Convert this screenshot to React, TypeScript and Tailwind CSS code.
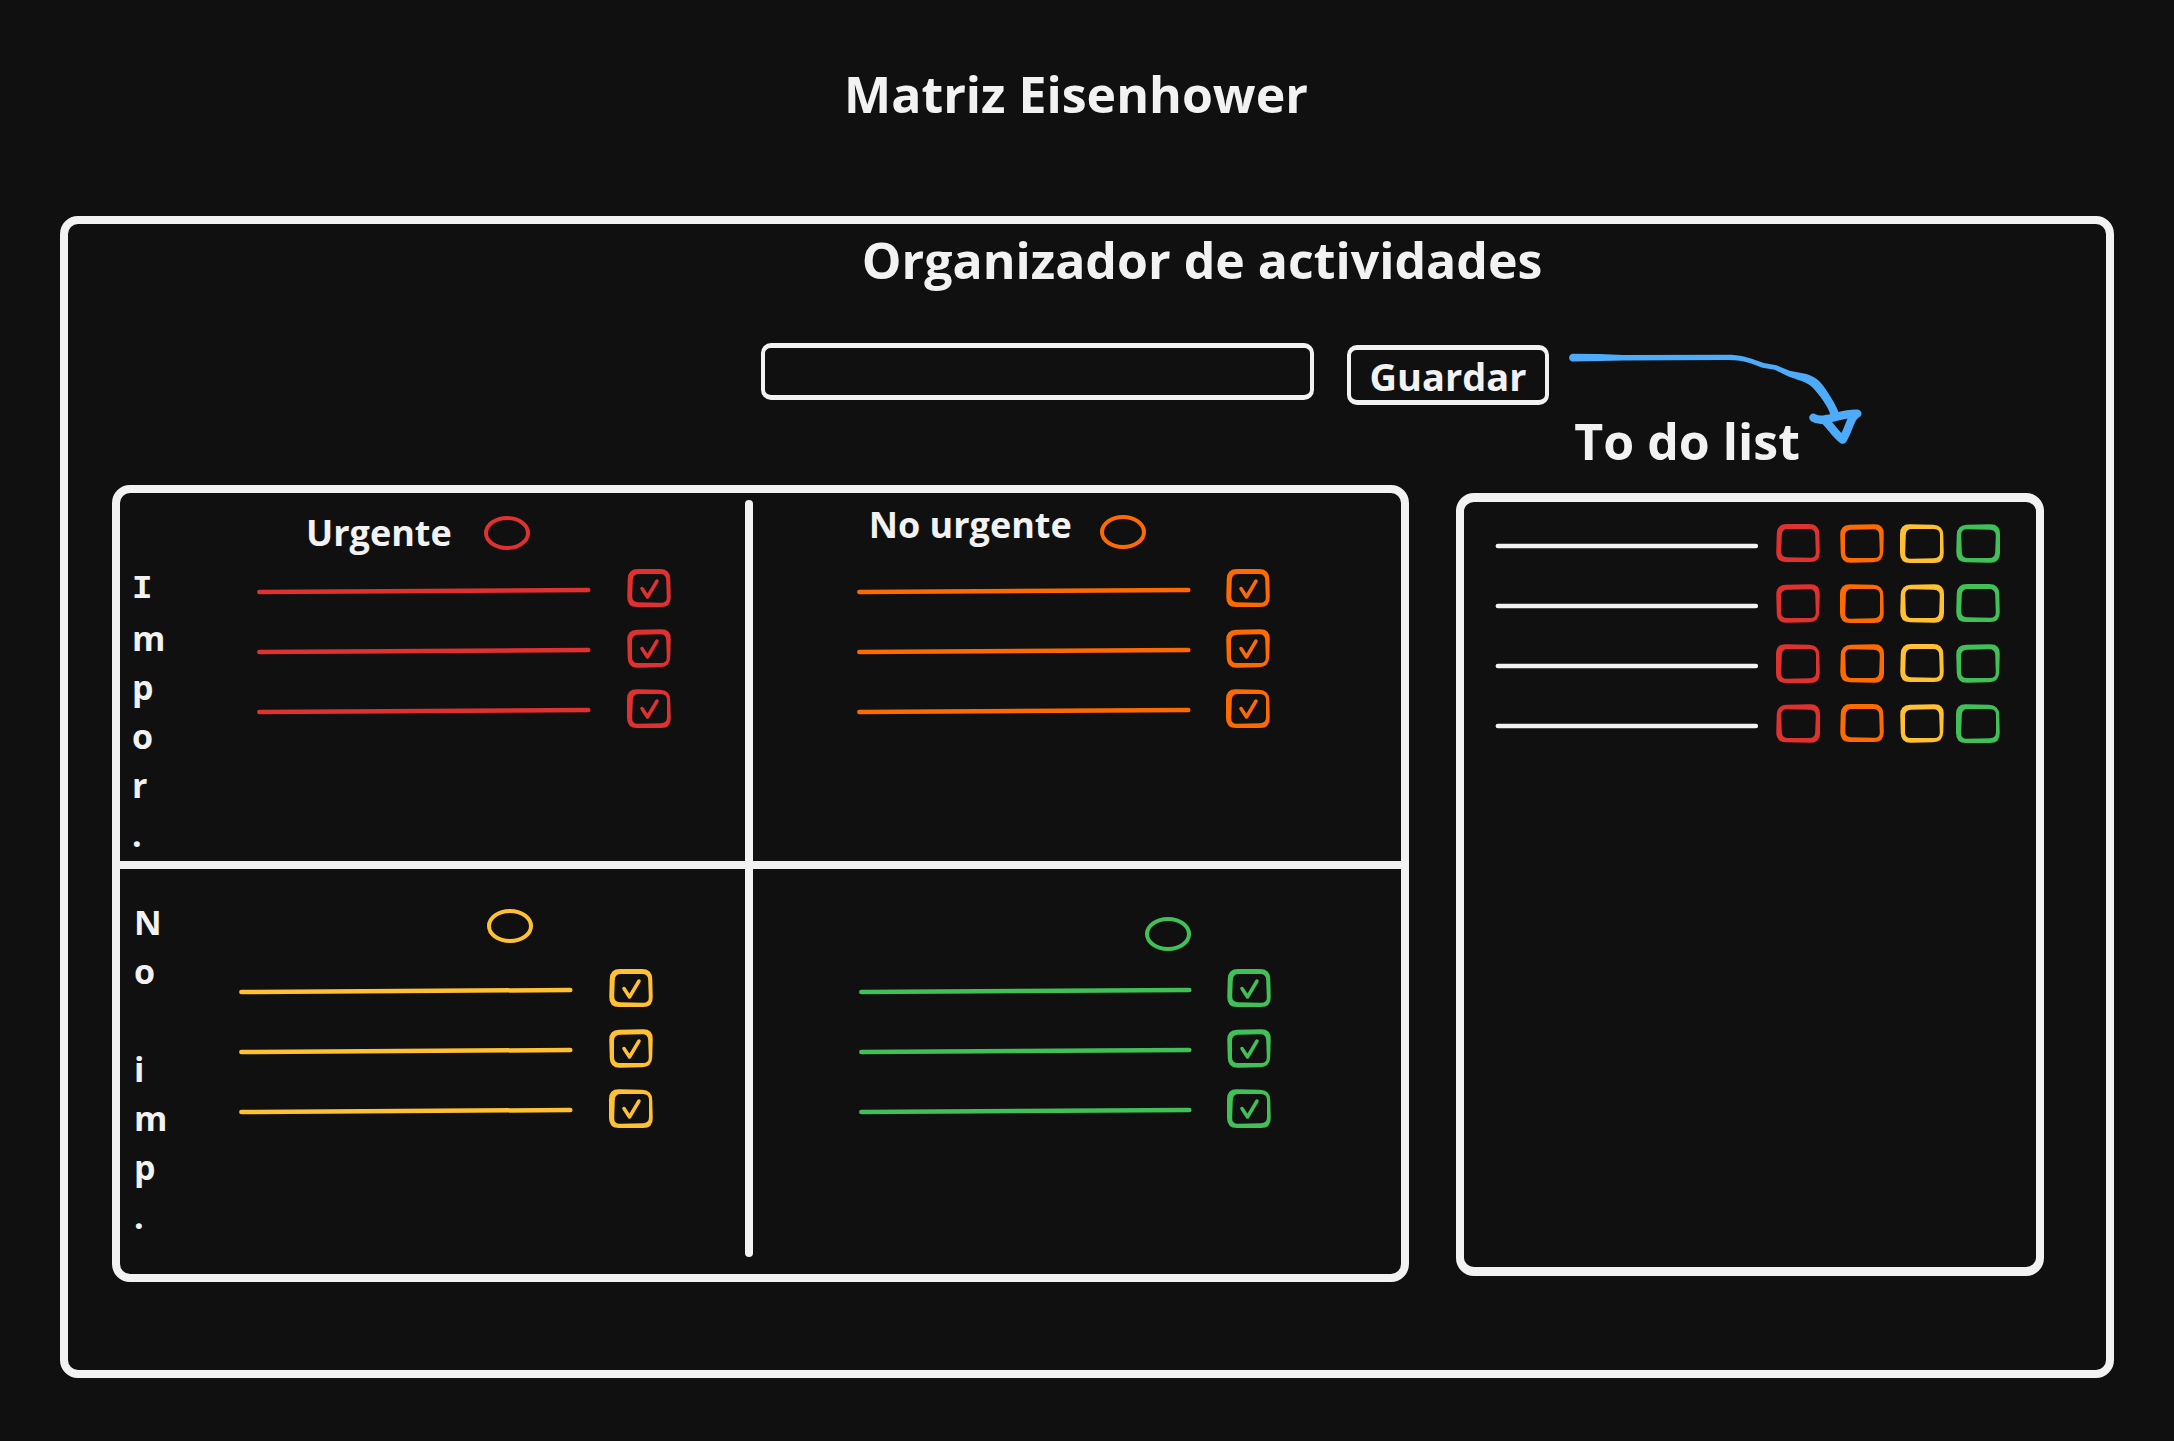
import React from "react";

type Point = [number, number];

/** Builds a closed path with soft corners through the given corner points. */
function softPath(points: Point[], radius: number): string {
  const toward = (from: Point, to: Point): Point => {
    const length = Math.hypot(to[0] - from[0], to[1] - from[1]);
    const t = radius / length;
    return [from[0] + (to[0] - from[0]) * t, from[1] + (to[1] - from[1]) * t];
  };
  return (
    points
      .map((p, i) => {
        const before = toward(p, points[(i + points.length - 1) % points.length]);
        const after = toward(p, points[(i + 1) % points.length]);
        return `${i === 0 ? "M" : "L"}${before.join(" ")} Q${p.join(" ")} ${after.join(" ")}`;
      })
      .join(" ") + " Z"
  );
}

const boxShapes: { outer: Point[]; inner: Point[] }[] = [
  { outer: [[1, 0], [43, 0], [44, 38], [0, 38]], inner: [[6, 5], [39, 5], [40, 34], [5, 33]] },
  { outer: [[0, 1], [44, 0], [43, 38], [1, 39]], inner: [[5, 6], [39, 5], [40, 34], [5, 34]] },
  { outer: [[0, 0], [43, 1], [44, 39], [0, 39]], inner: [[6, 5], [40, 5], [40, 34], [5, 35]] },
  { outer: [[1, 1], [44, 0], [44, 39], [0, 38]], inner: [[5, 5], [40, 6], [39, 34], [6, 34]] },
];

function SketchBox({
  label,
  color,
  shape,
  checked = false,
}: {
  label: string;
  color: string;
  shape: number;
  checked?: boolean;
}) {
  const { outer, inner } = boxShapes[shape % boxShapes.length];
  return (
    <label className={`relative block h-[39px] w-11 shrink-0 ${color}`}>
      <input
        type="checkbox"
        aria-label={label}
        defaultChecked={checked}
        className="peer absolute inset-0 z-10 m-0 cursor-pointer appearance-none"
      />
      <svg viewBox="0 0 44 39" className="block h-full w-full" aria-hidden="true">
        <path fill="currentColor" fillRule="evenodd" d={`${softPath(outer, 10)} ${softPath(inner, 6)}`} />
      </svg>
      <svg
        viewBox="0 0 44 39"
        className="absolute inset-0 hidden h-full w-full peer-checked:block"
        fill="none"
        stroke="currentColor"
        strokeWidth="3.5"
        strokeLinecap="round"
        strokeLinejoin="round"
        aria-hidden="true"
      >
        <path d="M15 19.5 L20.5 28 C23.5 23 27 17 30 12" />
      </svg>
    </label>
  );
}

function SketchLine({ color, slope = 1 }: { color: string; slope?: number }) {
  return (
    <svg
      viewBox="0 0 100 8"
      preserveAspectRatio="none"
      className={`mt-1 h-2 min-w-0 flex-1 overflow-visible ${color}`}
      aria-hidden="true"
    >
      <line
        x1="0.7"
        x2="99.3"
        y1={4 + slope}
        y2={4 - slope}
        stroke="currentColor"
        strokeWidth="4.5"
        strokeLinecap="round"
        vectorEffect="non-scaling-stroke"
      />
    </svg>
  );
}

function Ring({ color }: { color: string }) {
  return (
    <svg viewBox="0 0 46 34" className={`h-[34px] w-[46px] shrink-0 ${color}`} aria-hidden="true">
      <ellipse cx="23" cy="17" rx="21" ry="15" fill="none" stroke="currentColor" strokeWidth="4" />
    </svg>
  );
}

function TaskList({ name, color, className }: { name: string; color: string; className: string }) {
  return (
    <ul className={`flex flex-col gap-[21px] ${className}`}>
      {[0, 1, 2].map((i) => (
        <li key={i} className="flex items-center gap-9">
          <SketchLine color={color} />
          <SketchBox label={`${name} ${i + 1}`} color={color} shape={i} checked />
        </li>
      ))}
    </ul>
  );
}

function RowLabel({ text }: { text: string }) {
  return (
    <h3 className="w-[30px] shrink-0 text-[34px] leading-[49px] font-bold" aria-label={text}>
      {text.split("").map((letter, i) => (
        <span key={i} className={letter === "I" ? "block h-[49px] font-['Liberation_Mono']" : "block h-[49px]"}>
          {letter}
        </span>
      ))}
    </h3>
  );
}

function ArrowToList() {
  return (
    <svg
      viewBox="87 100 880 276"
      className="absolute top-2 left-full ml-5 h-[92px] w-[293px] text-[#4dabf9]"
      aria-hidden="true"
    >
      <path
        fill="currentColor"
        d="M97 102 L180 103 L250 106 L575 105 C610 107 640 118 672 130 L710 137 L750 153 L800 163 C835 173 850 196 862 215 C875 236 890 258 899 284 L872 286 C868 264 840 227 820 205 C805 189 790 186 750 172 L738 167 L705 150 L668 144 L632 131 C610 123 590 121 565 121 L250 122 L180 124 L97 125 C84 122 84 106 97 102 Z"
      />
      <path
        fill="none"
        stroke="currentColor"
        strokeWidth="25"
        strokeLinecap="round"
        strokeLinejoin="round"
        d="M821 294 C832 301 845 302 860 298 C890 293 920 280 953 282 C932 290 930 325 909 360 C885 342 876 322 856 303"
      />
    </svg>
  );
}

const RED = "text-[#e03131]";
const ORANGE = "text-[#fd6a02]";
const YELLOW = "text-[#ffc034]";
const GREEN = "text-[#40c057]";

const categories = [
  { name: "Urgente e importante", color: RED, space: "" },
  { name: "No urgente e importante", color: ORANGE, space: "ml-5" },
  { name: "Urgente y no importante", color: YELLOW, space: "ml-4" },
  { name: "No urgente y no importante", color: GREEN, space: "ml-3" },
];

export default function App() {
  return (
    <div className="min-h-screen bg-[#101010] px-[60px] pt-16 pb-[59px] font-['Open_Sans',sans-serif] text-[#f2f2f2]">
      <h1 className="pr-[22px] text-center text-[50px] leading-[60px] font-bold">Matriz Eisenhower</h1>

      <main className="mt-[92px] rounded-[18px] border-8 border-[#f2f2f2] pr-[62px] pb-[88px] pl-11">
        <h2 className="pt-[6px] pl-[248px] text-center text-[50px] leading-[60px] font-bold">
          Organizador de actividades
        </h2>

        <form className="mt-[53px] flex justify-center gap-[33px] pl-[154px]" onSubmit={(e) => e.preventDefault()}>
          <input
            type="text"
            aria-label="Nueva actividad"
            className="h-[57px] w-[553px] rounded-[10px] border-x-4 border-y-[5px] border-[#f2f2f2] bg-transparent px-4 text-[34px] outline-none"
          />
          <div className="relative mt-[2px]">
            <button
              type="submit"
              className="h-[60px] w-[202px] rounded-[10px] border-x-4 border-y-[5px] border-[#f2f2f2] pt-[2px] text-[38px] leading-[48px] font-bold"
            >
              Guardar
            </button>
            <ArrowToList />
          </div>
        </form>

        <div className="grid grid-cols-[1298fr_588fr] gap-[47px]">
          <section
            aria-label="Matriz"
            className="mt-20 grid grid-cols-[625fr_8px_649fr] grid-rows-[minmax(368px,auto)_8px_minmax(405px,auto)] rounded-[18px] border-8 border-[#f2f2f2]"
          >
            <div className="col-start-2 row-span-3 row-start-1 mt-[7px] mb-[17px] rounded-full bg-[#f2f2f2]" />
            <div className="col-span-3 col-start-1 row-start-2 bg-[#f2f2f2]" />

            <div className="col-start-1 row-start-1 flex pl-3">
              <div className="pt-[72px]">
                <RowLabel text="Impor." />
              </div>
              <div className="min-w-0 flex-1 pt-4">
                <div className="flex items-center gap-8 pl-36">
                  <h3 className="text-[36px] leading-[48px] font-bold">Urgente</h3>
                  <Ring color={RED} />
                </div>
                <TaskList name="Urgente e importante" color={RED} className="mt-3 pr-[74px] pl-[95px]" />
              </div>
            </div>

            <div className="col-start-3 row-start-1 pt-2">
              <div className="flex items-end gap-7 pl-[116px]">
                <h3 className="text-[36px] leading-[48px] font-bold">No urgente</h3>
                <Ring color={ORANGE} />
              </div>
              <TaskList name="No urgente e importante" color={ORANGE} className="mt-5 pr-[131px] pl-[104px]" />
            </div>

            <div className="col-start-1 row-start-3 flex pl-[14px]">
              <div className="pt-[29px]">
                <RowLabel text="No imp." />
              </div>
              <div className="min-w-0 flex-1 pt-10">
                <div className="pl-[323px]">
                  <Ring color={YELLOW} />
                </div>
                <TaskList name="Urgente y no importante" color={YELLOW} className="mt-[26px] pr-[92px] pl-[75px]" />
              </div>
            </div>

            <div className="col-start-3 row-start-3 pt-12">
              <div className="pl-[392px]">
                <Ring color={GREEN} />
              </div>
              <TaskList name="No urgente y no importante" color={GREEN} className="mt-[18px] pr-[130px] pl-[106px]" />
            </div>
          </section>

          <section className="flex flex-col pt-[6px] pb-[6px]" aria-labelledby="todo-title">
            <h2 id="todo-title" className="pl-[118px] text-[50px] leading-[60px] font-bold">
              To do list
            </h2>
            <ul className="mt-[22px] flex flex-1 flex-col gap-[21px] rounded-[18px] border-8 border-y-[9px] border-[#f2f2f2] pt-[22px] pr-9 pl-8">
              {[0, 1, 2, 3].map((row) => (
                <li key={row} className="flex items-center">
                  <SketchLine color="text-[#f2f2f2]" slope={0} />
                  <div className="flex pl-[18px]">
                    {categories.map((c, i) => (
                      <div key={c.name} className={c.space}>
                        <SketchBox label={`${c.name}, actividad ${row + 1}`} color={c.color} shape={row + i} />
                      </div>
                    ))}
                  </div>
                </li>
              ))}
            </ul>
          </section>
        </div>
      </main>
    </div>
  );
}
